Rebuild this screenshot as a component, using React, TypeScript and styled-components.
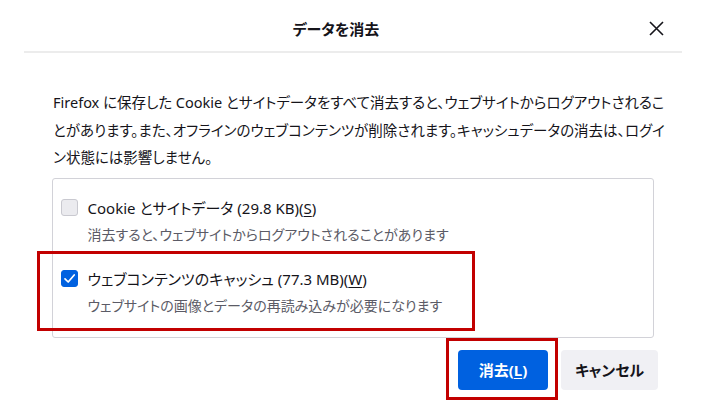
import styled, { createGlobalStyle } from "styled-components";

const GlobalStyle = createGlobalStyle`
  html, body {
    margin: 0;
    padding: 0;
    background: #ffffff;
  }
  body {
    font-family: "Noto Sans", "Noto Sans CJK JP", sans-serif;
    font-feature-settings: "palt";
    color: #15141a;
  }
`;

const Dialog = styled.div`
  width: 706px;
  height: 411px;
  overflow: hidden;
  background: #ffffff;
`;

const Header = styled.header`
  margin: 0 24px;
  height: 51px;
  display: flex;
  align-items: center;
  border-bottom: 2px solid #ececec;
`;

const Title = styled.h1`
  flex: 1;
  margin: 0;
  padding-top: 6px;
  text-align: center;
  font-size: 15px;
  font-weight: 700;
`;

const CloseButton = styled.button`
  width: 34px;
  height: 24px;
  margin-top: 6px;
  padding: 0 0 0 1px;
  display: flex;
  align-items: center;
  justify-content: flex-start;
  border: none;
  background: transparent;
  color: #15141a;
`;

const Body = styled.div`
  width: 606px;
  padding: 36px 0 0 52px;
`;

const Description = styled.p`
  margin: 0 0 6px;
  padding-left: 1px;
  font-size: 14.5px;
  line-height: 27.5px;
  white-space: nowrap;
`;

const List = styled.div`
  margin-right: 4px;
  padding: 17px 0 19px 7.5px;
  border: 1.5px solid #d2d2d8;
  border-radius: 3px;
  display: flex;
  flex-direction: column;
  gap: 20px;
`;

const Item = styled.div<{ $marked?: boolean }>`
  position: relative;

  &::before {
    content: "";
    display: ${(p) => (p.$marked ? "block" : "none")};
    position: absolute;
    left: -24px;
    top: -15.5px;
    width: 438px;
    bottom: -13.5px;
    border: 3px solid #c20000;
    box-sizing: border-box;
    pointer-events: none;
  }
`;

const Row = styled.label`
  display: flex;
  align-items: center;
  gap: 10px;
  font-size: 15px;
  line-height: 24px;
`;

const Box = styled.span<{ $checked?: boolean }>`
  width: 17px;
  height: 17px;
  box-sizing: border-box;
  border-radius: 3px;
  display: flex;
  align-items: center;
  justify-content: center;
  background: ${(p) => (p.$checked ? "#0061e0" : "#ebebef")};
  border: 1px solid ${(p) => (p.$checked ? "#0061e0" : "#c9c9d0")};
`;

const Hint = styled.div`
  margin: 3px 0 0 27px;
  font-size: 14px;
  line-height: 24px;
  color: #5b5b66;
`;

const Key = styled.span`
  text-decoration: underline;
  text-underline-offset: 2px;
`;

const Actions = styled.div`
  margin-top: 12px;
  display: flex;
  justify-content: flex-end;
  gap: 13px;
`;

const Marked = styled.div`
  position: relative;

  &::before {
    content: "";
    position: absolute;
    left: -12px;
    top: -12px;
    right: -10px;
    bottom: -10px;
    border: 3px solid #c20000;
    pointer-events: none;
  }
`;

const Button = styled.button<{ $primary?: boolean; $w: number }>`
  width: ${(p) => p.$w}px;
  height: 40px;
  border: none;
  border-radius: 4px;
  font-family: inherit;
  font-feature-settings: "palt";
  font-size: 15px;
  font-weight: 700;
  color: ${(p) => (p.$primary ? "#ffffff" : "#15141a")};
  background: ${(p) => (p.$primary ? "#0061e0" : "#f0f0f4")};
`;

function Check({ checked }: { checked?: boolean }) {
  return (
    <Box $checked={checked}>
      {checked && (
        <svg width="13" height="13" viewBox="0 0 13 13">
          <path d="M2 6.8 L5.2 10 L11.2 3" fill="none" stroke="#fff" strokeWidth="1.7" strokeLinecap="round" strokeLinejoin="round" />
        </svg>
      )}
    </Box>
  );
}

export default function App() {
  return (
    <Dialog>
      <GlobalStyle />
      <Header>
        <Title>データを消去</Title>
        <CloseButton aria-label="閉じる">
          <svg width="15" height="15" viewBox="0 0 15 15">
            <path d="M1 1 L14 14 M14 1 L1 14" stroke="#15141a" strokeWidth="1.6" />
          </svg>
        </CloseButton>
      </Header>
      <Body>
        <Description>
          Firefox に保存した Cookie とサイトデータをすべて消去すると、ウェブサイトからログアウトされるこ
          <br />
          とがあります。また、オフラインのウェブコンテンツが削除されます。キャッシュデータの消去は、ログイ
          <br />
          ン状態には影響しません。
        </Description>
        <List>
          <Item>
            <Row>
              <Check />
              <span>
                Cookie とサイトデータ (29.8 KB)(<Key>S</Key>)
              </span>
            </Row>
            <Hint>消去すると、ウェブサイトからログアウトされることがあります</Hint>
          </Item>
          <Item $marked>
            <Row>
              <Check checked />
              <span>
                ウェブコンテンツのキャッシュ (77.3 MB)(<Key>W</Key>)
              </span>
            </Row>
            <Hint>ウェブサイトの画像とデータの再読み込みが必要になります</Hint>
          </Item>
        </List>
        <Actions>
          <Marked>
            <Button $primary $w={90}>
              消去(<Key>L</Key>)
            </Button>
          </Marked>
          <Button $w={97}>キャンセル</Button>
        </Actions>
      </Body>
    </Dialog>
  );
}
